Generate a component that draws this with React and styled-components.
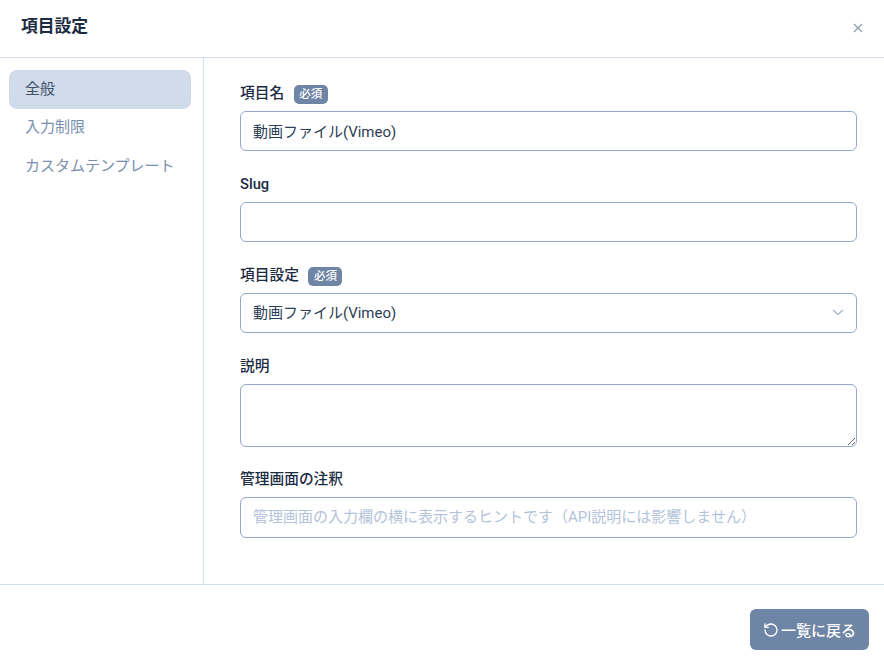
import React from 'react'
import styled, { createGlobalStyle } from 'styled-components'

const GlobalStyle = createGlobalStyle`
  * { box-sizing: border-box; }
  html, body { margin: 0; padding: 0; background: #fff; }
  body {
    font-family: Roboto, "Noto Sans CJK JP", sans-serif;
    color: #1a2b42;
  }
`

const Modal = styled.div`
  width: 884px;
  height: 664px;
  display: flex;
  flex-direction: column;
  background: #fff;
  overflow: hidden;
`

const Header = styled.header`
  height: 58px;
  flex: none;
  display: flex;
  align-items: center;
  justify-content: space-between;
  padding: 0 21px 2px;
  border-bottom: 1px solid #d5dde6;
`

const Heading = styled.h2`
  margin: 0 0 4px;
  font-size: 16.8px;
  line-height: 24px;
  font-weight: 700;
  color: #1a2b42;
`

const CloseButton = styled.button`
  border: none;
  background: none;
  padding: 0;
  display: flex;
  color: #8a99ae;
`

const Body = styled.div`
  height: 527px;
  flex: none;
  display: flex;
  border-bottom: 1px solid #d3deeb;
`

const Sidebar = styled.nav`
  width: 204px;
  flex: none;
  padding: 12px 12px 0 9px;
  border-right: 1px solid #d3deeb;
  display: flex;
  flex-direction: column;
`

const NavItem = styled.div`
  height: 38.6px;
  padding: 0 16px 1px;
  display: flex;
  align-items: center;
  font-size: 15px;
  line-height: 22px;
  border-radius: 8px;
  color: ${p => (p.$active ? '#3f5068' : '#7a8fae')};
  background: ${p => (p.$active ? '#d0dcea' : 'transparent')};
`

const Content = styled.div`
  flex: 1;
  padding: 26px 27px 0 36px;
`

const Field = styled.div`
  margin-bottom: ${p => p.$gap || 24}px;
`

const Label = styled.label`
  height: 19px;
  display: flex;
  align-items: center;
  gap: 9.5px;
  margin-bottom: 8px;
  font-size: 14.72px;
  line-height: 19px;
  font-weight: 500;
  color: #1a2b42;
`

const Badge = styled.span`
  height: 19px;
  margin-top: 1px;
  padding: 0 5.5px;
  display: inline-flex;
  align-items: center;
  border-radius: 5px;
  font-size: 11.5px;
  font-weight: 500;
  color: #fff;
  background: #6f85a5;
`

const Input = styled.input`
  display: block;
  width: 100%;
  height: ${p => p.$height || 40}px;
  padding: 0 12px 2px;
  font: inherit;
  font-size: 15px;
  color: #2c3d55;
  background: #fff;
  border: 1px solid #94a9c9;
  border-radius: 6px;
  outline: none;

  &::placeholder {
    color: #b3c3da;
    opacity: 1;
  }
`

const SelectBox = styled.div`
  height: 40px;
  padding: 0 12px 3px;
  display: flex;
  align-items: center;
  justify-content: space-between;
  font-size: 15px;
  color: #2c3d55;
  border: 1px solid #94a9c9;
  border-radius: 6px;
`

const ChevronIcon = styled.svg`
  color: #a0b2cc;
`

const TextArea = styled.textarea`
  display: block;
  width: 100%;
  height: 63px;
  padding: 8px 12px;
  font: inherit;
  font-size: 15px;
  background: #fff;
  border: 1px solid #94a9c9;
  border-radius: 6px;
  outline: none;
`

const Footer = styled.footer`
  flex: 1;
  display: flex;
  align-items: flex-start;
  justify-content: flex-end;
  padding: 24px 15px 0 0;
`

const BackButton = styled.button`
  width: 119px;
  height: 41px;
  display: flex;
  align-items: center;
  justify-content: center;
  gap: 2px;
  border: none;
  border-radius: 6px;
  font: inherit;
  font-size: 15px;
  font-weight: 500;
  color: #fff;
  background: #6f85a5;
`

const App = () => {
  return (
    <>
      <GlobalStyle />
      <Modal>
        <Header>
          <Heading>項目設定</Heading>
          <CloseButton aria-label="閉じる">
            <svg width="10" height="10" viewBox="0 0 10 10" fill="none" stroke="currentColor" strokeWidth="1.1">
              <path d="M1 1l8 8M9 1L1 9" />
            </svg>
          </CloseButton>
        </Header>
        <Body>
          <Sidebar>
            <NavItem $active>全般</NavItem>
            <NavItem>入力制限</NavItem>
            <NavItem>カスタムテンプレート</NavItem>
          </Sidebar>
          <Content>
            <Field>
              <Label>項目名<Badge>必須</Badge></Label>
              <Input defaultValue="動画ファイル(Vimeo)" />
            </Field>
            <Field>
              <Label>Slug</Label>
              <Input />
            </Field>
            <Field>
              <Label>項目設定<Badge>必須</Badge></Label>
              <SelectBox>
                動画ファイル(Vimeo)
                <ChevronIcon width="12" height="12" viewBox="0 0 12 12" fill="none" stroke="currentColor" strokeWidth="1.2">
                  <path d="M1 4l5 4.5L11 4" />
                </ChevronIcon>
              </SelectBox>
            </Field>
            <Field $gap={23}>
              <Label>説明</Label>
              <TextArea />
            </Field>
            <Field>
              <Label>管理画面の注釈</Label>
              <Input $height={41} placeholder="管理画面の入力欄の横に表示するヒントです（API説明には影響しません）" />
            </Field>
          </Content>
        </Body>
        <Footer>
          <BackButton>
            <svg width="16" height="16" viewBox="0 0 24 24" fill="none" stroke="currentColor" strokeWidth="2" strokeLinecap="round" strokeLinejoin="round">
              <path d="M3 12a9 9 0 1 0 9-9 9.75 9.75 0 0 0-6.74 2.74L3 8" />
              <path d="M3 3v5h5" />
            </svg>
            一覧に戻る
          </BackButton>
        </Footer>
      </Modal>
    </>
  )
}

export default App
